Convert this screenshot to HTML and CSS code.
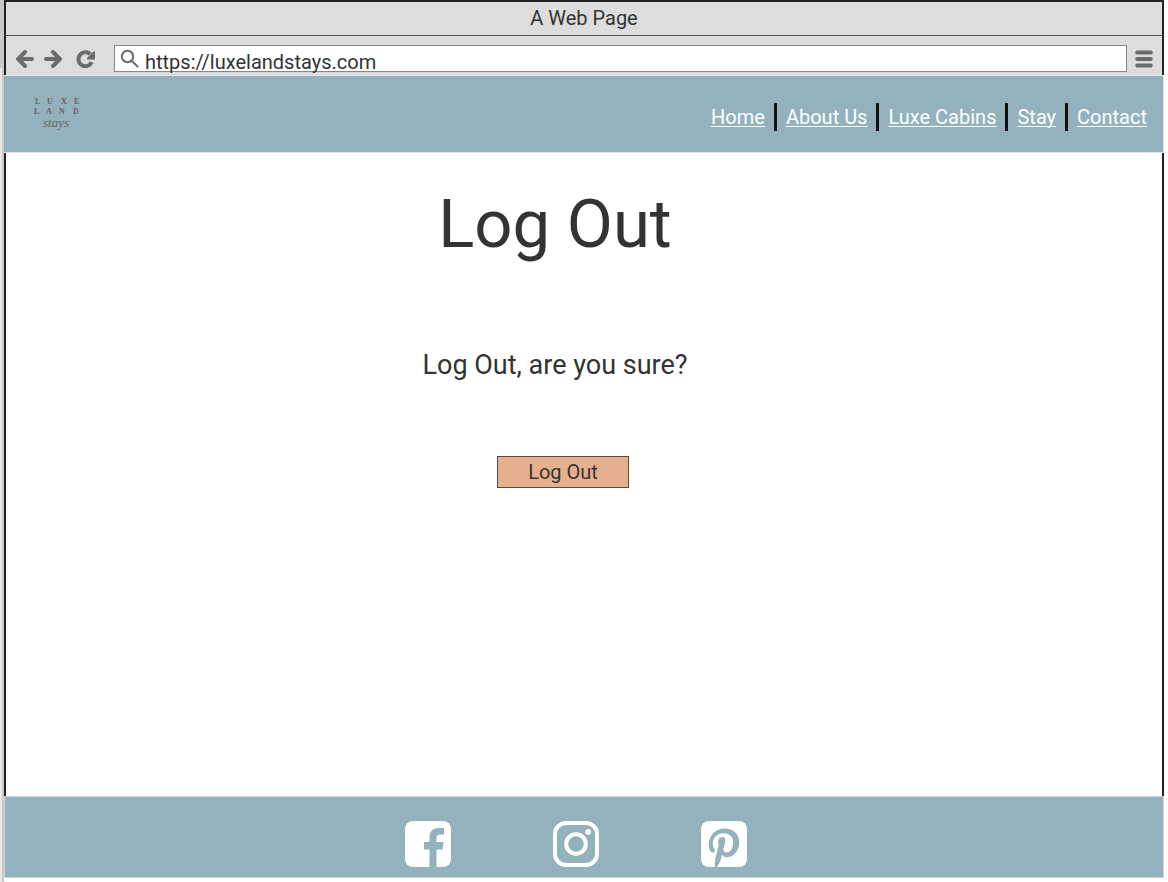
FILE: index.html
```html
<!DOCTYPE html>
<html lang="en">
<head>
<meta charset="utf-8">
<meta name="viewport" content="width=device-width, initial-scale=1">
<title>Log Out</title>
<link rel="stylesheet" href="styles.css">
</head>
<body>
<div class="window">
  <div class="titlebar">A Web Page</div>
  <div class="toolbar">
    <div class="history">
      <button class="tool" type="button" aria-label="Back"><svg width="18" height="18" viewBox="0 0 18 18"><path d="M9 2 2 9l7 7M2.500 9H16" /></svg></button>
      <button class="tool" type="button" aria-label="Forward"><svg width="18" height="18" viewBox="0 0 18 18"><path d="M9 2l7 7-7 7M15.500 9H2" /></svg></button>
      <button class="tool reload" type="button" aria-label="Reload"><svg width="20" height="18" viewBox="0 0 20 18"><path d="M15.800 12.200A7 7 0 1 1 14.200 4" /><path class="solid" d="M17.500 1.500H19V9.500h-8V8z" /></svg></button>
    </div>
    <label class="address">
      <svg width="20" height="20" viewBox="0 0 20 20"><circle cx="7.500" cy="7.500" r="5.700" /><path d="M12 12l5.500 5.500" /></svg>
      <input type="text" value="https://luxelandstays.com" aria-label="Address">
    </label>
    <button class="tool" type="button" aria-label="Menu"><svg width="18" height="18" viewBox="0 0 18 18"><path d="M2.200 2.500h13.600M2.200 9h13.600M2.200 15.500h13.600" /></svg></button>
  </div>
  <header class="header">
    <a class="logo" href="#" aria-label="Luxe Land Stays">
      <svg width="50" height="40" viewBox="0 0 50 40">
        <text class="caps" x="4 16 30 43" y="7">LUXE</text>
        <text class="caps" x="3 15 28 42" y="17">LAND</text>
        <text class="script" x="25" y="30" text-anchor="middle">stays</text>
      </svg>
    </a>
    <nav class="nav">
      <a href="#">Home</a>
      <a href="#">About Us</a>
      <a href="#">Luxe Cabins</a>
      <a href="#">Stay</a>
      <a href="#">Contact</a>
    </nav>
  </header>
  <main class="main">
    <h1>Log Out</h1>
    <p>Log Out, are you sure?</p>
    <button class="logout" type="button">Log Out</button>
  </main>
  <footer class="footer">
    <a href="#" aria-label="Facebook"><svg width="46" height="46" viewBox="0 0 46 46"><rect class="white" width="46" height="46" rx="8" /><path class="cut" d="M24.500 46V28.500H19V21h5.500v-4.500c0-6 3.500-9.500 9-9.500H39v6.500h-3.500c-3 0-4 1.300-4 4V21h7l-.8 7.500h-6.200V46z" /></svg></a>
    <a href="#" aria-label="Instagram"><svg width="46" height="46" viewBox="0 0 46 46"><rect class="line" x="2" y="2" width="42" height="42" rx="11" /><circle class="line" cx="23" cy="23" r="9.800" /><circle class="white" cx="35.200" cy="10.800" r="2.900" /></svg></a>
    <a href="#" aria-label="Pinterest"><svg width="46" height="46" viewBox="0 0 46 46"><rect class="white" width="46" height="46" rx="8" /><path class="cut" d="M14 46c-.6-5 .5-9 1.600-13.500l2-8.500c-1.200-4 .2-8 3.600-8 2.700 0 3.600 2.300 2.900 5.200l-1.600 6c-.6 2.500.8 4.200 3.100 4.200 4.300 0 6.600-5.200 6.600-10.400 0-5.200-3.600-8.800-9.700-8.800-6.700 0-10.700 4.900-10.700 10.700 0 2 .6 3.700 1.700 5 .8 1 .2 4-1.500 3.800C9.200 31 7.700 27.500 7.700 23.700 7.700 15 14.500 7.600 23.800 7.600c8.600 0 14.400 5.600 14.400 13.200 0 8.700-5 15.400-12.200 15.400-2.400 0-4.200-1.200-5-2.700-1.200 5.200-2 8.500-5 12.500z" /></svg></a>
  </footer>
</div>
</body>
</html>
```
FILE: styles.css
```css
* {
  box-sizing: border-box;
}

body {
  margin: 0;
  padding: 0 4px 4px 4px;
  min-height: 100vh;
  display: flex;
  background: linear-gradient(#c9c9cd, #c9c9cd) 0 0 / 4px 68px no-repeat,
    linear-gradient(90deg, #e8e8e8 2px, #c9c9c9 2px, #c9c9c9 4px, transparent 4px) #fff;
  color: #333;
  font-family: Roboto, "Liberation Sans", sans-serif;
  font-size: 20px;
}

button,
input {
  font: inherit;
  color: inherit;
}

.window {
  flex: 1;
  display: flex;
  flex-direction: column;
}

.titlebar {
  height: 36px;
  border: 2px solid #222;
  border-bottom: 1px solid #555;
  background: #ddd;
  line-height: 32px;
  text-align: center;
}

.toolbar {
  display: flex;
  align-items: center;
  gap: 8px;
  height: 39px;
  padding: 6px 9px 0 10px;
  border: solid #222;
  border-width: 0 2px;
  background: #ddd;
}

.history {
  display: flex;
  gap: 10px;
  width: 90px;
}

.tool {
  padding: 0;
  border: 0;
  background: none;
}

.tool svg,
.address svg {
  display: block;
  fill: none;
  stroke: #6b6b6b;
  stroke-width: 4;
  stroke-linecap: round;
}

.reload {
  margin-left: 4px;
}

.reload svg {
  stroke-linecap: butt;
}

.reload .solid {
  fill: #6b6b6b;
  stroke: none;
}

.address {
  flex: 1;
  display: flex;
  align-items: center;
  gap: 5px;
  height: 27px;
  padding-left: 5px;
  border: 1px solid #888;
  background: #fff;
}

.address svg {
  stroke-width: 2;
}

.address input {
  flex: 1;
  align-self: flex-start;
  min-width: 0;
  height: 32px;
  padding: 0;
  border: 0;
  background: none;
  outline: 0;
}

.header {
  display: flex;
  align-items: center;
  justify-content: space-between;
  height: 78px;
  padding: 6px 16px 0 27px;
  border: 1px solid #dbe6ea;
  border-left: 0;
  background: #94b2bd;
}

.logo svg {
  display: block;
  fill: #68625e;
  font-family: "Liberation Serif", serif;
}

.caps {
  font-size: 8px;
  font-weight: 700;
}

.script {
  font-size: 13px;
  font-style: italic;
}

.nav {
  display: flex;
  align-items: center;
}

.nav a {
  color: #fff;
  line-height: 28px;
  text-underline-offset: 2px;
  text-decoration-thickness: 1px;
}

.nav a + a {
  margin-left: 9px;
  padding-left: 9px;
  border-left: 3px solid #111;
}

.main {
  flex: 1;
  display: flex;
  flex-direction: column;
  align-items: center;
  padding: 31px 58px 32px 0;
  border: solid #222;
  border-width: 0 2px;
  background: #fff;
}

.main h1 {
  margin: 0;
  font-size: 67px;
  font-weight: 400;
  line-height: 80px;
}

.main p {
  margin: 81px 0 71px;
  font-size: 27px;
  line-height: 40px;
}

.logout {
  width: 132px;
  height: 32px;
  margin-left: 16px;
  padding: 0;
  border: 1px solid #59483e;
  background: #e6b08e;
}

.footer {
  display: flex;
  justify-content: center;
  gap: 102px;
  height: 82px;
  padding: 24px 16px 0 0;
  border: 1px solid #cbd5d9;
  background: #94b2bd;
}

.footer svg {
  display: block;
}

.white {
  fill: #fff;
}

.cut {
  fill: #94b2bd;
}

.line {
  fill: none;
  stroke: #fff;
  stroke-width: 4;
}
```
